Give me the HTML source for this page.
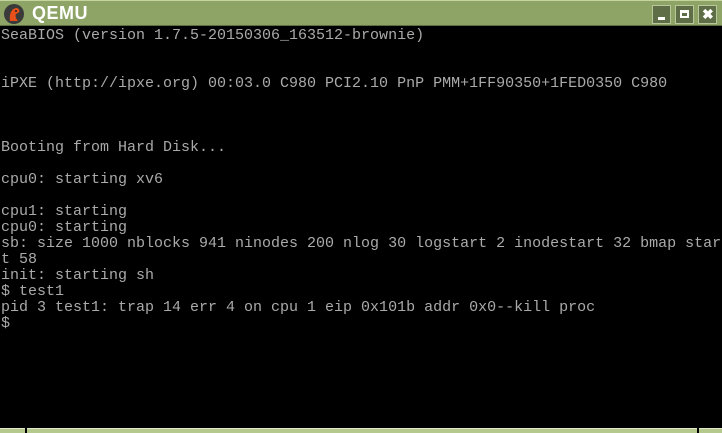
<!DOCTYPE html>
<html><head><style>
html,body{margin:0;padding:0;background:#000;width:722px;height:433px;overflow:hidden}
#tb{position:absolute;left:0;top:0;width:722px;height:26px;background:#8ea466;border-top:1px solid #c4d49c;box-sizing:border-box;border-bottom:1px solid #5e6e40}
#tb .t{position:absolute;left:32px;top:2px;font:bold 18px "Liberation Sans",sans-serif;color:#fff;letter-spacing:0.5px}
.btn{position:absolute;top:4px;width:19px;height:19px;background:#5f6e46;border:1px solid #b8c89a;box-sizing:border-box}
#scr{position:absolute;left:1px;top:28px;font:15px/16px "Liberation Mono",monospace;color:#aaa;white-space:pre;margin:0}
#bot{position:absolute;left:0;top:428px;width:722px;height:5px;background:#b5c98e;border-top:1px solid #e0eac8;box-sizing:border-box}
</style></head><body>
<div id="tb">
<svg style="position:absolute;left:3px;top:2px" width="22" height="22" viewBox="0 0 22 22"><circle cx="11" cy="11" r="10" fill="#3a3a3a"/><path d="M7 18 C6 10 9 5 14 5 C17 6 17 9 15 10 L13 11 C12 13 13 16 15 18 Z" fill="#e8501a"/><circle cx="13" cy="8" r="1" fill="#222"/></svg>
<div class="t">QEMU</div>
<div class="btn" style="left:652px"><div style="position:absolute;left:5px;top:11px;width:7px;height:3px;background:#fff"></div></div>
<div class="btn" style="left:675px"><div style="position:absolute;left:4px;top:4px;width:9px;height:8px;border:2px solid #fff;border-top-width:3px;box-sizing:border-box"></div></div>
<div class="btn" style="left:698px"><div style="position:absolute;left:3px;top:0px;font:bold 14px 'Liberation Sans',sans-serif;color:#fff">✖</div></div>
</div>
<pre id="scr">SeaBIOS (version 1.7.5-20150306_163512-brownie)


iPXE (http://ipxe.org) 00:03.0 C980 PCI2.10 PnP PMM+1FF90350+1FED0350 C980



Booting from Hard Disk...

cpu0: starting xv6

cpu1: starting
cpu0: starting
sb: size 1000 nblocks 941 ninodes 200 nlog 30 logstart 2 inodestart 32 bmap star
t 58
init: starting sh
$ test1
pid 3 test1: trap 14 err 4 on cpu 1 eip 0x101b addr 0x0--kill proc
$</pre>
<div id="bot"></div>
<div style="position:absolute;left:25px;top:428px;width:2px;height:5px;background:#000"></div>
<div style="position:absolute;left:697px;top:428px;width:2px;height:5px;background:#000"></div>
</body></html>
